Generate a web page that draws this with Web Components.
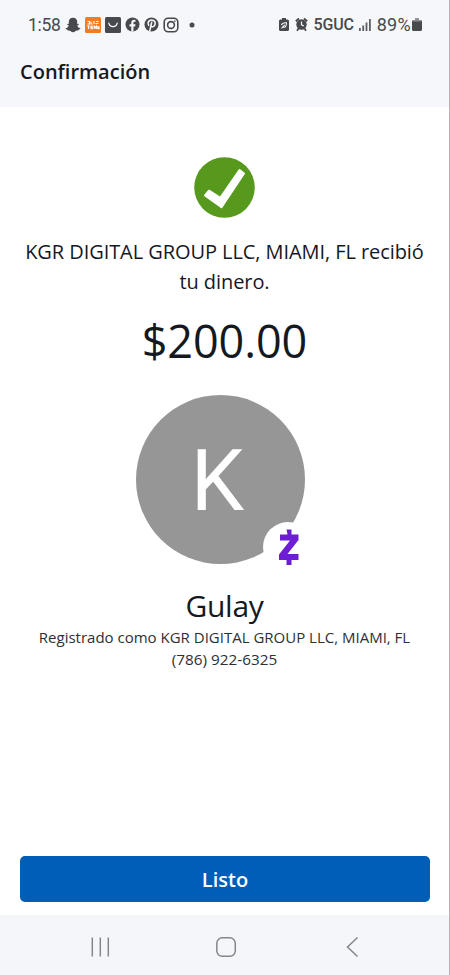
<!DOCTYPE html>
<html lang="es">
<head>
<meta charset="utf-8">
<title>Confirmación</title>
<style>
  body {
    margin: 0;
    font-family: "Open Sans", "Noto Sans", sans-serif;
    color: #14191f;
    background: #fff;
  }
</style>
</head>
<body>
<phone-screen>
  <status-bar slot="top" time="1:58" network="5GUC" battery="89%"></status-bar>
  <page-header slot="top">Confirmación</page-header>
  <payment-receipt>
    <span slot="message">KGR DIGITAL GROUP LLC, MIAMI, FL recibió<br>tu dinero.</span>
    <span slot="amount">$200.00</span>
    <contact-avatar slot="avatar">K</contact-avatar>
    <span slot="name">Gulay</span>
    <span slot="registered">Registrado como KGR DIGITAL GROUP LLC, MIAMI, FL</span>
    <span slot="phone">(786) 922-6325</span>
  </payment-receipt>
  <action-button slot="bottom">Listo</action-button>
  <nav-bar slot="bottom"></nav-bar>
</phone-screen>

<script>
class ShadowElement extends HTMLElement {
  constructor() {
    super();
    const t = document.createElement("template");
    t.innerHTML = this.template;
    this.attachShadow({ mode: "open" });
    this.shadowRoot.appendChild(t.content.cloneNode(true));
  }
}

/**
 * Full-height column: bars at both ends, content between
 */
class PhoneScreen extends ShadowElement {
  get template() {
    return `
    <style>
      :host {
        display: flex;
        flex-direction: column;
        box-sizing: border-box;
        width: 450px;
        height: 975px;
        overflow: hidden;
        border-right: 1px solid #b4b5b8;
      }

      main {
        flex: 1;
        min-height: 0;
      }
    </style>
    <slot name="top"></slot>
    <main><slot></slot></main>
    <slot name="bottom"></slot>
    `;
  }
}

class StatusBar extends ShadowElement {
  get template() {
    return `
    <style>
      :host {
        display: flex;
        align-items: center;
        justify-content: space-between;
        box-sizing: border-box;
        height: 49px;
        padding: 0 27px 0 28px;
        background: #f5f7fb;
        color: #48494c;
        font-family: Roboto, sans-serif;
        font-size: 17px;
      }

      div {
        display: flex;
        align-items: center;
      }

      svg {
        display: block;
        flex: none;
      }

      .apps { gap: 4px; }
      .time { width: 33px; font-size: 17.5px; letter-spacing: -0.3px; }
      .network { margin-left: 6px; font-size: 16px; font-weight: 500; letter-spacing: -0.2px; }
      .signal { margin: 0 6px 0 5px; }
      .battery { margin-right: 1px; font-size: 18px; letter-spacing: 0.3px; }
      .alarm { margin-left: 6px; }
    </style>
    <div class="apps">
      <span class="time"></span>
      <svg width="16" height="16" viewBox="0 0 16 16"><path fill="#48494c" d="M8 .8c2.800 0 4.200 1.900 4.200 4.200v2l1.300-.3c.7.4.3 1.100-1.200 1.800.5 1.700 1.700 2.600 3.200 3-.1.8-1.100 1-2 1.200-.2.8-.5 1-1.300.8-1.600-.1-2.200 1.700-4.200 1.700s-2.600-1.800-4.200-1.700c-.8.2-1.100 0-1.300-.8-.9-.2-1.900-.4-2-1.200 1.500-.4 2.700-1.300 3.200-3C2.200 7.800 1.800 7.100 2.500 6.700l1.300.3V5C3.800 2.700 5.200.8 8 .8z"/></svg>
      <svg width="16" height="16" viewBox="0 0 16 16"><rect width="16" height="16" rx="1.500" fill="#f47b20"/><path fill="none" stroke="#fff" stroke-width="1.100" d="M2.500 4.500h2v2.500h-2M6 4.500v2.500h1.500M9 4v3M11 4.500h2.500M10.500 6.500h3M2.200 9h2.600M3.500 9v3M8 9.200H6v2.600h2M6 10.500h1.800M9.200 12V9.200l1.100 1.500 1.100-1.500V12M12.800 9.200v2.600H14V9.200"/></svg>
      <svg width="16" height="16" viewBox="0 0 16 16"><rect width="16" height="16" rx="1.500" fill="#48494c"/><path fill="none" stroke="#fff" stroke-width="1.200" stroke-linecap="round" d="M3.800 6.200c1 4.600 7.400 4.600 8.400 0"/></svg>
      <svg width="15" height="15" viewBox="0 0 16 16"><circle cx="8" cy="8" r="7.500" fill="#48494c"/><path fill="#f5f7fb" d="M6.700 15.400V10H4.800V7.700h1.900V6.200c0-2.100 1.200-3.200 3-3.200l1.500.1v2h-1c-.9 0-1.200.5-1.200 1.200v1.400h2.200L10.800 10H9v5.400z"/></svg>
      <svg width="15" height="15" viewBox="0 0 16 16"><circle cx="8" cy="8" r="7.500" fill="#48494c"/><path fill="none" stroke="#f5f7fb" stroke-width="1.700" stroke-linecap="round" d="M8.200 5.800 6.200 14.500M5 8.800C3.200 6.200 5 3.300 8.200 3.300c2.800 0 4.200 2 3.600 4.300-.6 2.700-3.100 3.700-4.400 2"/></svg>
      <svg width="16" height="16" viewBox="0 0 16 16" fill="none" stroke="#48494c" stroke-width="1.600"><rect x="1.200" y="1.200" width="13.600" height="13.600" rx="4"/><circle cx="8" cy="8" r="3.400"/><circle cx="11.800" cy="4.200" r=".5" stroke-width="1"/></svg>
      <svg width="16" height="16" viewBox="0 0 16 16"><circle cx="9" cy="8" r="2.500" fill="#48494c"/></svg>
    </div>
    <div>
      <svg width="10" height="15" viewBox="0 0 10 15"><path fill="#48494c" d="M3 1h4v1.500h1.500Q10 2.500 10 4v8.500q0 1.500-1.500 1.500h-7Q0 14 0 12.500V4q0-1.500 1.500-1.500H3z"/><path fill="none" stroke="#f5f7fb" stroke-width="1.100" d="M2.500 8.200C3 6.200 5 5.600 7.500 5.800 7.500 9.400 6.200 10.700 3.300 10.200M2.500 11.400 5.800 7.900"/></svg>
      <svg class="alarm" width="13" height="15" viewBox="0 0 13 15"><circle cx="6.500" cy="7.500" r="5.200" fill="#48494c"/><path fill="none" stroke="#48494c" stroke-width="1.800" d="M.8 4.300 4 1.500M12.200 4.300 9 1.500M3.500 11.500 2 13.700M9.500 11.500 11 13.700"/><path fill="none" stroke="#f5f7fb" stroke-width="1.200" d="M6.500 4.500v3.300l2.300 1.300"/></svg>
      <span class="network"></span>
      <svg class="signal" width="12" height="12" viewBox="0 0 12 12" fill="#606165"><path d="M0 9h1.800v3H0zM3.300 6.500h1.800V12H3.300zM6.600 3.500h1.800V12H6.600zM10 0h1.800v12H10z"/></svg>
      <span class="battery"></span>
      <svg width="10" height="14" viewBox="0 0 10 14"><path fill="#48494c" d="M3 .5h4V2h1.500Q10 2 10 3.500v8q0 1.500-1.500 1.500h-7Q0 13 0 11.500v-8Q0 2 1.500 2H3z"/><path fill="#8d8e91" d="M3 .5h4V2h2v1.500H1V2h2z"/></svg>
    </div>
    `;
  }

  connectedCallback() {
    for (const name of ["time", "network", "battery"]) {
      this.shadowRoot.querySelector("." + name).textContent = this.getAttribute(name);
    }
  }
}

class PageHeader extends ShadowElement {
  get template() {
    return `
    <style>
      :host {
        display: block;
        box-sizing: border-box;
        height: 58px;
        padding: 9px 20px 0;
        background: #f5f7fb;
        font-size: 20px;
        font-weight: 600;
        line-height: 28px;
      }
    </style>
    <slot></slot>
    `;
  }
}

class PaymentReceipt extends ShadowElement {
  get template() {
    return `
    <style>
      :host {
        display: flex;
        flex-direction: column;
        align-items: center;
        padding-top: 50px;
        text-align: center;
        white-space: nowrap;
      }

      .check { display: block; }
      .message { margin-top: 19px; font-size: 20px; line-height: 30px; letter-spacing: -0.07px; }
      .amount { margin-top: 11px; font-size: 45px; line-height: 66px; letter-spacing: -0.1px; }
      .avatar { margin: 21px 8px 0 0; }
      .name { margin-top: 22px; font-size: 30px; line-height: 40px; letter-spacing: -0.3px; }
      .registered, .phone { font-size: 15px; line-height: 22px; color: #2c3035; }
      .phone { font-size: 15.3px; }
    </style>
    <svg class="check" width="61" height="61" viewBox="0 0 61 61">
      <circle cx="30.500" cy="30.500" r="30.300" fill="#56991c"/>
      <path fill="#fff" stroke="#fff" stroke-width="2" stroke-linejoin="round" d="M45.500 13 50 16.500 27.500 50.300 11 38.500 15 33.700 26.300 40.800z"/>
    </svg>
    <div class="message"><slot name="message"></slot></div>
    <div class="amount"><slot name="amount"></slot></div>
    <div class="avatar"><slot name="avatar"></slot></div>
    <div class="name"><slot name="name"></slot></div>
    <div class="registered"><slot name="registered"></slot></div>
    <div class="phone"><slot name="phone"></slot></div>
    `;
  }
}

/**
 * Initial in a circle, with the Zelle mark over its lower right edge
 */
class ContactAvatar extends ShadowElement {
  get template() {
    return `
    <style>
      :host {
        position: relative;
        display: flex;
        align-items: center;
        justify-content: center;
        box-sizing: border-box;
        width: 169px;
        height: 169px;
        padding: 4px 6px 0 0;
        border-radius: 50%;
        background: #969696;
        color: #fff;
        font-family: Roboto, sans-serif;
        font-size: 85px;
        line-height: 1;
      }

      svg {
        position: absolute;
        left: 127px;
        top: 127px;
      }
    </style>
    <slot></slot>
    <svg width="50" height="50" viewBox="0 0 50 50">
      <circle cx="25" cy="25" r="25" fill="#fff"/>
      <path fill="#6d1ed4" d="M23.500 7.500h5v5h7v5.500l-11 14h11v6h-7v5h-5v-5h-7.500v-5.500l11-14h-10v-6h7.500z"/>
    </svg>
    `;
  }
}

class ActionButton extends ShadowElement {
  get template() {
    return `
    <style>
      :host {
        display: block;
        padding: 0 19px 13px 20px;
      }

      button {
        display: block;
        width: 100%;
        height: 46px;
        padding: 1px 0 0;
        border: 0;
        border-radius: 5px;
        background: #005eb8;
        color: #fff;
        font: 600 20px/45px "Open Sans", sans-serif;
      }
    </style>
    <button><slot></slot></button>
    `;
  }
}

class NavBar extends ShadowElement {
  get template() {
    return `
    <style>
      :host {
        display: block;
        height: 60px;
        background: #f5f6f9;
      }

      svg { display: block; }
    </style>
    <svg width="449" height="60" viewBox="0 0 449 60" fill="none" stroke="#858689" stroke-width="1.500">
      <path d="M92.300 22.500v19M100.300 22.500v19M108.300 22.500v19"/>
      <rect x="216.800" y="22.800" width="18.500" height="18.500" rx="5.500"/>
      <path d="M357.500 22.500 347.500 32l10 9.500"/>
    </svg>
    `;
  }
}

customElements.define("phone-screen", PhoneScreen);
customElements.define("status-bar", StatusBar);
customElements.define("page-header", PageHeader);
customElements.define("payment-receipt", PaymentReceipt);
customElements.define("contact-avatar", ContactAvatar);
customElements.define("action-button", ActionButton);
customElements.define("nav-bar", NavBar);
</script>
</body>
</html>
